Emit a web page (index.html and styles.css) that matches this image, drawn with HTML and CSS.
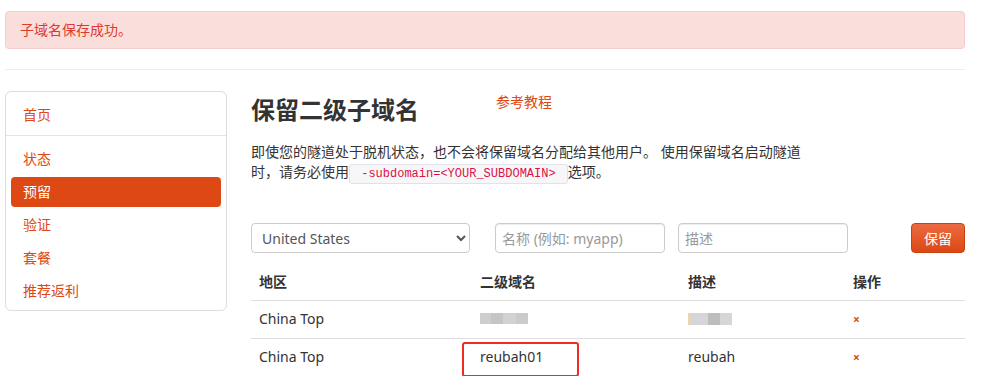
FILE: index.html
```html
<!DOCTYPE html>
<html lang="zh-CN">

<head>
    <meta charset="UTF-8">
    <meta name="viewport" content="width=device-width, initial-scale=1.0">
    <title>预留</title>
    <link rel="stylesheet" href="styles.css">
</head>

<body>
    <div class="page">
        <div class="alert">子域名保存成功。</div>
        <hr class="rule">

        <div class="layout">
            <aside class="sidebar">
                <ul class="nav">
                    <li><a href="#">首页</a></li>
                    <li class="divider"></li>
                    <li><a href="#">状态</a></li>
                    <li class="active"><a href="#">预留</a></li>
                    <li><a href="#">验证</a></li>
                    <li><a href="#">套餐</a></li>
                    <li><a href="#">推荐返利</a></li>
                </ul>
            </aside>

            <main class="content">
                <div class="title-row">
                    <h2>保留二级子域名</h2>
                    <a class="guide" href="#">参考教程</a>
                </div>
                <p class="intro">即使您的隧道处于脱机状态，也不会将保留域名分配给其他用户。 使用保留域名启动隧道时，请务必使用<code> -subdomain=&lt;YOUR_SUBDOMAIN&gt; </code>选项。</p>

                <form class="reserve-form" action="#">
                    <select class="region">
                        <option>United States</option>
                        <option>China Top</option>
                    </select>
                    <input class="field field-name" type="text" placeholder="名称 (例如: myapp)">
                    <input class="field field-desc" type="text" placeholder="描述">
                    <button type="submit" class="btn">保留</button>
                </form>

                <table class="domains">
                    <colgroup>
                        <col class="c-region">
                        <col class="c-name">
                        <col class="c-desc">
                        <col class="c-action">
                    </colgroup>
                    <thead>
                        <tr>
                            <th>地区</th>
                            <th>二级域名</th>
                            <th>描述</th>
                            <th>操作</th>
                        </tr>
                    </thead>
                    <tbody>
                        <tr>
                            <td>China Top</td>
                            <td><span class="blur blur-name"></span></td>
                            <td><span class="blur blur-desc"></span></td>
                            <td><a class="remove" href="#">×</a></td>
                        </tr>
                        <tr>
                            <td>China Top</td>
                            <td class="marked">reubah01<span class="mark"></span></td>
                            <td>reubah</td>
                            <td><a class="remove" href="#">×</a></td>
                        </tr>
                    </tbody>
                </table>
            </main>
        </div>
    </div>
</body>

</html>
```

FILE: styles.css
```css
* {
    box-sizing: border-box;
    margin: 0;
    padding: 0;
}

body {
    font-family: "Noto Sans", "Noto Sans CJK SC", sans-serif;
    font-size: 14px;
    line-height: 20px;
    color: #333;
    background-color: #fff;
}

.page {
    width: 960px;
    margin-left: 5px;
    padding-top: 11px;
}

.alert {
    padding: 8px 35px 8px 14px;
    color: #df382c;
    background-color: #fadedc;
    border: 1px solid #f8cccb;
    border-radius: 4px;
}

.rule {
    margin-top: 20px;
    border: 0;
    border-top: 1px solid #eee;
}

.layout {
    display: flex;
    align-items: flex-start;
    gap: 24px;
    margin-top: 21px;
}

/* sidebar */

.sidebar {
    width: 222px;
    flex-shrink: 0;
    padding: 8px 5px 4px;
    border: 1px solid #ddd;
    border-radius: 6px;
}

.nav {
    list-style: none;
    display: flex;
    flex-direction: column;
    gap: 3px;
}

.nav a {
    display: block;
    padding: 5px 12px;
    color: #dd4814;
    text-decoration: none;
}

.nav .active a {
    color: #fff;
    background-color: #dd4814;
    border-radius: 4px;
}

.nav .divider {
    height: 1px;
    margin: 2px -5px 5px;
    background-color: #e5e5e5;
}

/* content */

.content {
    width: 714px;
}

.title-row {
    display: flex;
    align-items: flex-start;
}

.title-row h2 {
    font-size: 24px;
    line-height: 38px;
    font-weight: bold;
    color: #333;
}

.guide {
    margin: 1px 0 0 77px;
    color: #dd4814;
    text-decoration: none;
}

.intro {
    width: 556px;
    margin-top: 13px;
}

.intro code {
    font-family: "Liberation Mono", monospace;
    font-size: 12px;
    line-height: 14px;
    white-space: pre;
    padding: 2px 4px;
    color: #d14;
    background-color: #f7f7f9;
    border: 1px solid #e1e1e8;
    border-radius: 3px;
}

.reserve-form {
    display: flex;
    align-items: center;
    margin-top: 41px;
}

.region,
.field {
    height: 30px;
    padding: 4px 6px;
    font-family: inherit;
    font-size: 14px;
    color: #555;
    background-color: #fff;
    border: 1px solid #ccc;
    border-radius: 4px;
}

.region {
    width: 219px;
    margin-right: 25px;
}

.field {
    width: 170px;
    box-shadow: inset 0 1px 1px rgba(0, 0, 0, 0.075);
}

.field::placeholder {
    color: #999;
}

.field-desc {
    margin-left: 13px;
}

.btn {
    margin-left: auto;
    width: 54px;
    height: 30px;
    font-family: inherit;
    font-size: 14px;
    color: #fff;
    background: linear-gradient(#ec6a42, #dd4814);
    border: 1px solid #c8410f;
    border-radius: 4px;
}

/* table */

.domains {
    width: 100%;
    margin-top: 11px;
    table-layout: fixed;
    border-collapse: separate;
    border-spacing: 0;
}

.c-region {
    width: 221px;
}

.c-name {
    width: 208px;
}

.c-desc {
    width: 165px;
}

.c-action {
    width: 120px;
}

.domains th,
.domains td {
    padding: 8px;
    line-height: 20px;
    text-align: left;
    vertical-align: top;
}

.domains th {
    font-weight: bold;
}

.domains td {
    border-top: 1px solid #ddd;
}

.blur {
    display: inline-block;
    height: 11px;
    margin-top: 4px;
    filter: blur(0.6px);
}

.blur-name {
    width: 48px;
    background: linear-gradient(90deg, #cfcdcd 0 22%, #c7c4c4 22% 48%, #d2d2d2 48% 75%, #cbcbcb 75%);
}

.blur-desc {
    width: 44px;
    height: 12px;
    background: linear-gradient(90deg, #f6d59a 0 5%, #d6d6d6 5% 45%, #bdbdbd 45% 73%, #d6d6d6 73%);
}

.remove {
    font-size: 12px;
    font-weight: bold;
    color: #dd4814;
    text-decoration: none;
}

.marked {
    position: relative;
}

.mark {
    position: absolute;
    left: -10px;
    top: 3px;
    width: 117px;
    height: 35px;
    border: 2px solid #ee2b24;
    border-radius: 3px;
}
```
